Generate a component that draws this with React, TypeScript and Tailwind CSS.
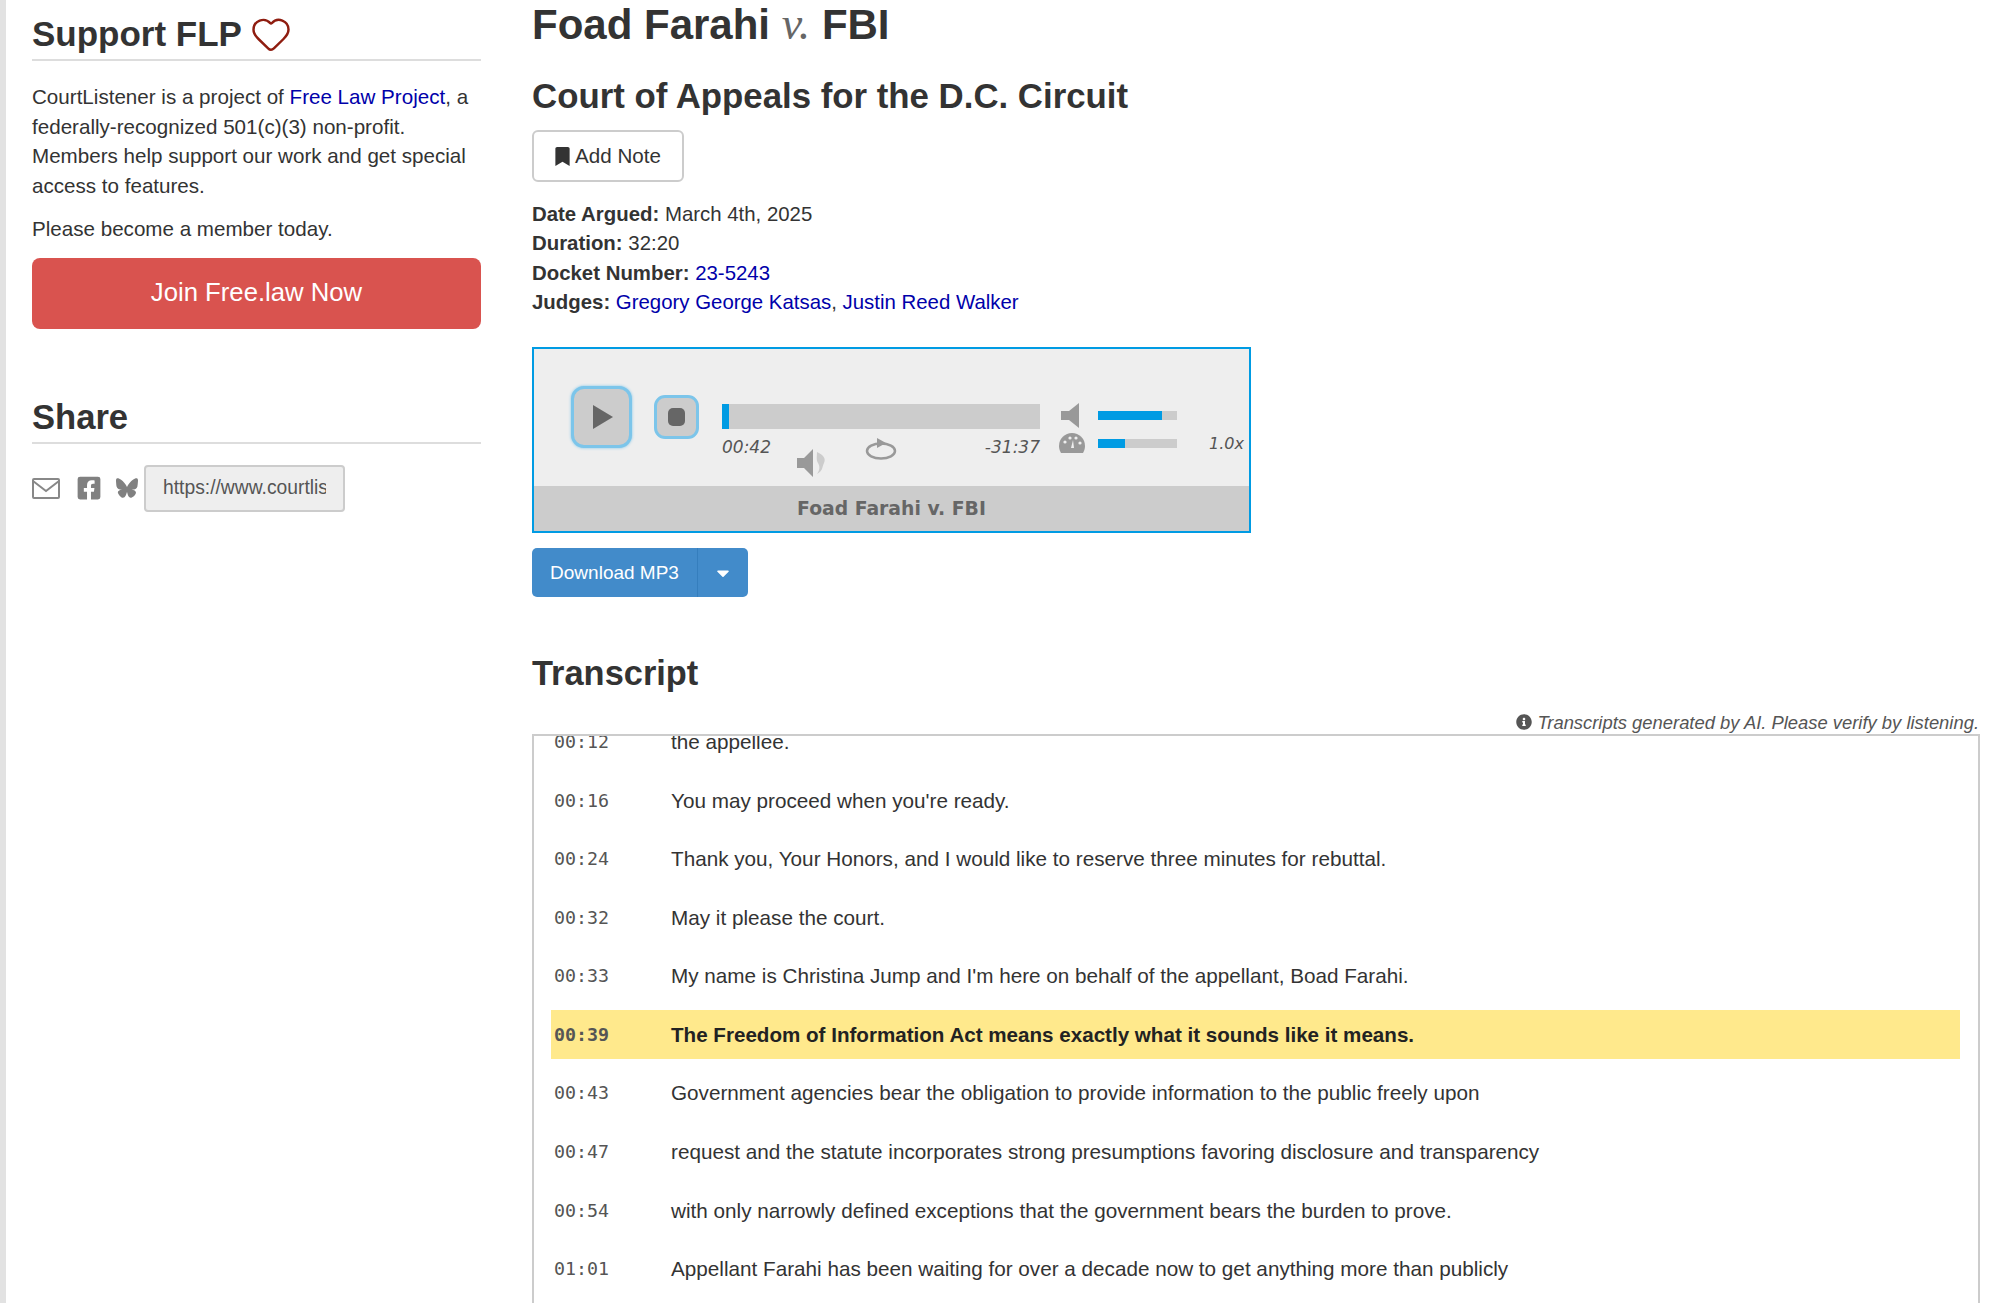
import { FaBookmark, FaFacebookSquare, FaInfoCircle, FaCaretDown } from "react-icons/fa";
import { FaBluesky } from "react-icons/fa6";
import { Heart } from "lucide-react";

const rows = [
  ["00:16", "You may proceed when you're ready."],
  ["00:24", "Thank you, Your Honors, and I would like to reserve three minutes for rebuttal."],
  ["00:32", "May it please the court."],
  ["00:33", "My name is Christina Jump and I'm here on behalf of the appellant, Boad Farahi."],
  ["00:39", "The Freedom of Information Act means exactly what it sounds like it means."],
  ["00:43", "Government agencies bear the obligation to provide information to the public freely upon"],
  ["00:47", "request and the statute incorporates strong presumptions favoring disclosure and transparency"],
  ["00:54", "with only narrowly defined exceptions that the government bears the burden to prove."],
  ["01:01", "Appellant Farahi has been waiting for over a decade now to get anything more than publicly"],
];

const Row = ({ time, text, active }: { time: string; text: string; active?: boolean }) => (
  <div className={active ? "flex items-center h-[49px] mb-[9.55px] bg-[#ffe98c] font-bold text-[20.6px] text-[#222]" : "flex items-center h-[49px] mb-[9.55px] text-[20.7px]"}>
    <span className="w-[120px] pl-[3px] shrink-0 text-[18.3px] text-[#555] font-['DejaVu_Sans_Mono',monospace]">{time}</span>
    <span>{text}</span>
  </div>
);

const Player = () => (
  <div className="w-[719px] h-[186px] border-2 border-[#009be3] bg-[#eeeeee] flex flex-col">
    <div className="h-[137px] flex pl-[37px] pt-[37px]">
      <div className="w-[61px] h-[62px] rounded-[13px] border-[3px] border-[#7cc5ea] bg-[#cccccc] shadow-[0_0_3px_#7cc5ea] flex items-center justify-center">
        <svg viewBox="0 0 20 24" className="w-[20px] h-[24px] ml-[2px]">
          <path d="M0 0l20 12L0 24z" fill="#666" />
        </svg>
      </div>
      <div className="ml-[22px] mt-[9px] w-[45px] h-[44px] rounded-[11px] border-[3px] border-[#7cc5ea] bg-[#cccccc] flex items-center justify-center">
        <div className="w-[17px] h-[18px] rounded-[5px] bg-[#666]" />
      </div>
      <div className="relative ml-[23px] mt-[18px] w-[318px]">
        <div className="h-[25px] bg-[#cccccc]">
          <div className="w-[7px] h-full bg-[#009be3]" />
        </div>
        <div className="flex justify-between mt-[6px] text-[17px] leading-[24px] italic text-[#555] font-['DejaVu_Sans',sans-serif]">
          <span>00:42</span>
          <span>-31:37</span>
        </div>
        <svg viewBox="0 0 32 28" className="absolute left-[75px] top-[45px] w-[32px] h-[28px]">
          <path d="M0 9h7l9-9v28l-9-9H0z" fill="#999" />
          <path d="M20 3c7 3 9 7 7 11s-1 8-7 11c3-4 3-8 1-11s-1-7-1-11z" fill="#ccc" />
        </svg>
        <svg viewBox="0 0 32 22" className="absolute left-[143px] top-[34px] w-[32px] h-[22px]" fill="none">
          <ellipse cx="16" cy="13" rx="14" ry="7.5" stroke="#999" strokeWidth="2.5" />
          <path d="M12 0l9 5-9 5z" fill="#999" />
        </svg>
      </div>
      <div className="ml-[19px] mt-[17px] w-[190px] relative">
        <div className="flex items-center h-[25px]">
          <svg viewBox="0 0 22 25" className="w-[22px] h-[25px] ml-[2px]">
            <path d="M0 8h8l10-8v25L8 17H0z" fill="#999" />
          </svg>
          <div className="ml-[15px] w-[79px] h-[9px] bg-[#cccccc]">
            <div className="w-[64px] h-full bg-[#009be3]" />
          </div>
        </div>
        <div className="flex items-center h-[20px] mt-[5px]">
          <svg viewBox="0 0 26 20" className="w-[26px] h-[20px]">
            <path d="M13 0a13 13 0 0 1 13 13c0 3-1 5-2 7H2c-1-2-2-4-2-7A13 13 0 0 1 13 0z" fill="#999" />
            <circle cx="6" cy="9" r="1.6" fill="#eee" />
            <circle cx="11" cy="5" r="1.6" fill="#eee" />
            <circle cx="17" cy="5" r="1.6" fill="#eee" />
            <circle cx="21" cy="10" r="1.6" fill="#eee" />
            <path d="M14 7l1 8h-3z" fill="#eee" />
          </svg>
          <div className="ml-[13px] w-[79px] h-[9px] bg-[#cccccc]">
            <div className="w-[27px] h-full bg-[#009be3]" />
          </div>
          <span className="ml-auto mr-[5px] text-[16px] italic text-[#555] font-['DejaVu_Sans',sans-serif]">1.0x</span>
        </div>
      </div>
    </div>
    <div className="flex-1 bg-[#cccccc] flex items-center justify-center text-[18.8px] font-bold text-[#666] font-['DejaVu_Sans',sans-serif]">
      Foad Farahi v. FBI
    </div>
  </div>
);

export default function App() {
  return (
    <div className="w-[2000px] h-[1303px] overflow-hidden flex bg-white text-[#333] text-[20.6px] leading-[29.5px] font-['Liberation_Sans',Arial,sans-serif]">
      <div className="w-[6px] shrink-0 bg-[#e2e2e2]" />

      <aside className="ml-[26px] w-[449px] shrink-0 pt-[14px]">
        <h3 className="flex items-center h-[47px] pb-[5px] text-[35px] leading-[40px] font-bold text-[#333] border-b-2 border-[#dddddd]">
          Support FLP
          <Heart className="ml-[8px] w-[42px] h-[42px] shrink-0 text-[#8f1d10]" strokeWidth={1.4} />
        </h3>
        <p className="mt-[21px]">
          CourtListener is a project of <a className="text-[#0000aa]">Free Law Project</a>, a federally-recognized 501(c)(3) non-profit. Members help support our work and get special access to features.
        </p>
        <p className="mt-[14px]">Please become a member today.</p>
        <button className="mt-[14px] w-full h-[71px] rounded-[8px] bg-[#d9534f] text-white text-[25.7px]">Join Free.law Now</button>

        <h3 className="mt-[68px] text-[34.6px] leading-[40px] font-bold text-[#333] pb-[5px] border-b-2 border-[#dddddd]">Share</h3>
        <div className="mt-[21px] flex items-center">
          <svg viewBox="0 0 28 21" className="w-[28px] h-[21px]" fill="none" stroke="#888" strokeWidth="2">
            <rect x="1" y="1" width="26" height="19" rx="1" />
            <path d="M1 3l13 10L27 3" />
          </svg>
          <FaFacebookSquare className="ml-[16px] w-[26px] h-[26px] text-[#808080]" />
          <FaBluesky className="ml-[14px] w-[22px] h-[20px] text-[#808080]" />
          <input
            readOnly
            value="https://www.courtlistener.com/audio/"
            className="ml-[6px] w-[201px] h-[47px] rounded-[4px] border-2 border-[#cccccc] bg-[#eeeeee] text-[19.3px] text-[#555] px-[17px] outline-none"
          />
        </div>
      </aside>

      <main className="ml-[51px] w-[1448px] shrink-0">
        <h1 className="pt-[1px] text-[42px] leading-[46px] font-bold">
          Foad Farahi <span className="font-['Liberation_Serif',serif] italic font-normal text-[46px] text-[#666]">v.</span> FBI
        </h1>
        <h2 className="mt-[25px] text-[34.8px] leading-[46px] font-bold">Court of Appeals for the D.C. Circuit</h2>
        <button className="mt-[11px] w-[152px] h-[52px] rounded-[6px] border-2 border-[#cccccc] flex items-center justify-center gap-[5px] bg-white">
          <FaBookmark className="w-[15px] h-[19px]" />
          Add Note
        </button>
        <div className="mt-[17.5px] text-[20.4px] leading-[29.6px]">
          <p><b>Date Argued:</b> March 4th, 2025</p>
          <p><b>Duration:</b> 32:20</p>
          <p><b>Docket Number:</b> <a className="text-[#0000aa]">23-5243</a></p>
          <p><b>Judges:</b> <a className="text-[#0000aa]">Gregory George Katsas</a>, <a className="text-[#0000aa]">Justin Reed Walker</a></p>
        </div>
        <div className="mt-[29.5px]">
          <Player />
        </div>
        <div className="mt-[15px] inline-flex h-[49px] rounded-[5px] bg-[#428bca] text-white text-[19px]">
          <span className="w-[166px] flex items-center justify-center border-r border-[#357ebd]">Download MP3</span>
          <span className="w-[50px] flex items-center justify-center"><FaCaretDown className="w-[20px] h-[20px]" /></span>
        </div>
        <h2 className="mt-[53px] text-[34.4px] leading-[46px] font-bold">Transcript</h2>
        <div className="mt-[14px] pr-[1px] flex items-center justify-end gap-[5px] h-[24px] italic text-[#555] text-[18.4px]">
          <FaInfoCircle className="w-[16px] h-[16px]" />
          Transcripts generated by AI. Please verify by listening.
        </div>
        <div className="h-[600px] border-2 border-[#cccccc] overflow-hidden pl-[17px] pr-[18px]">
          <div className="-mt-[19px]">
            <Row time="00:12" text="the appellee." />
            {rows.map(([time, text]) => (
              <Row key={time} time={time} text={text} active={time === "00:39"} />
            ))}
          </div>
        </div>
      </main>
    </div>
  );
}
